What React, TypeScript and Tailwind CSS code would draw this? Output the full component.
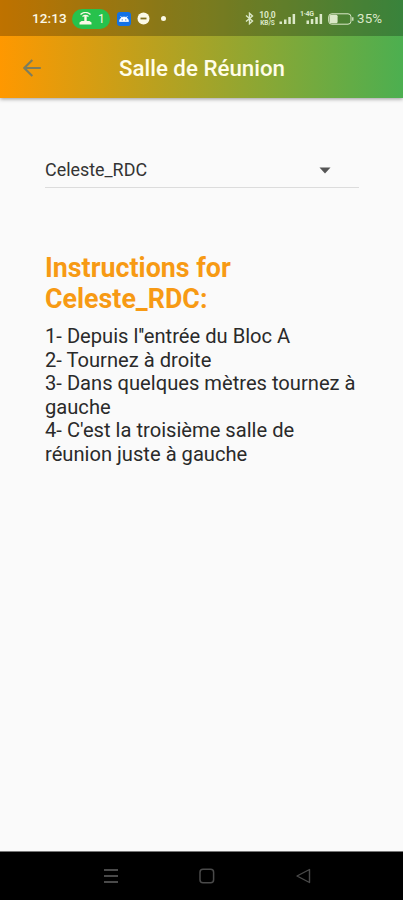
const steps = [
  "1- Depuis l''entrée du Bloc A",
  '2- Tournez à droite',
  '3- Dans quelques mètres tournez à gauche',
  "4- C'est la troisième salle de réunion juste à gauche",
]

const StatusBar = () => (
  <div className="flex h-9 items-center bg-black/25 pt-px pl-8 text-[#fbf9e6]">
    <span className="w-[35px] text-[13.5px] font-medium tracking-[0.1px] whitespace-nowrap">12:13</span>
    <div className="ml-[5px] flex h-[20px] w-[38px] items-center rounded-full bg-[#27c24c] pl-[7px]">
      <svg width="13" height="13" viewBox="0 0 13 13" fill="none" stroke="currentColor" strokeWidth="1.3">
        <path d="M1.5 2.6C4.5 0 8.5 0 11.5 2.6M3.5 4.6c2-1.6 4-1.6 6 0" />
        <path d="M6.5 4v5" strokeWidth="2.4" />
        <path d="M0.5 12.6v-2L2.5 9h8l2 1.6v2z" fill="currentColor" stroke="none" />
      </svg>
      <span className="ml-[6px] text-[12px]">1</span>
    </div>
    <svg className="ml-[7px]" width="14" height="14" viewBox="0 0 14 14">
      <rect width="14" height="14" rx="3" fill="#1372e6" />
      <path d="M2.5 9.5a4.5 4.5 0 0 1 9 0zM3.5 4l1.5 2.2M10.5 4L9 6.2" fill="#fff" stroke="#fff" strokeWidth="0.7" />
      <circle cx="5.2" cy="7.9" r="0.6" fill="#1372e6" />
      <circle cx="8.8" cy="7.9" r="0.6" fill="#1372e6" />
    </svg>
    <svg className="ml-[6px]" width="13" height="13" viewBox="0 0 13 13">
      <circle cx="6.5" cy="6.5" r="6" fill="currentColor" />
      <path d="M3.5 6.5h6" stroke="#806f1c" strokeWidth="1.8" />
    </svg>
    <span className="ml-[11px] size-[5px] rounded-full bg-[#fbf9e6]" />

    <div className="ml-[79px] flex items-center text-[#dbe8c8]">
      <svg width="9" height="13" viewBox="0 0 9 13" fill="none" stroke="currentColor" strokeWidth="1.4">
        <path d="M1 3.5l6.5 5.5-3 2.7V1.3l3 2.7L1 9.5" />
      </svg>
      <div className="ml-[5px] flex w-[17px] flex-col items-center font-bold whitespace-nowrap">
        <span className="text-[8.5px] leading-[9px] tracking-[-0.1px]">10,0</span>
        <span className="text-[6.5px] leading-[7px]">KB/S</span>
      </div>
      <svg className="ml-[3px]" width="17" height="12" viewBox="0 0 17 12" fill="currentColor">
        <rect x="0.5" y="8.5" width="2.5" height="2.5" />
        <rect x="5" y="6.5" width="2.5" height="4.5" />
        <rect x="9.3" y="4" width="2.5" height="7" />
        <rect x="13.6" y="1" width="2.5" height="10" />
      </svg>
      <div className="relative ml-[4px] flex w-[23px] justify-end">
        <span className="absolute top-[-2px] left-0 text-[7px] leading-[7px] font-bold tracking-[-0.3px]">1·4G</span>
        <svg width="17" height="12" viewBox="0 0 17 12" fill="currentColor">
          <rect x="0.5" y="7.5" width="2.5" height="3.5" />
          <rect x="4.8" y="6" width="2.5" height="5" />
          <rect x="9.3" y="4" width="2.5" height="7" />
          <rect x="13.6" y="1" width="2.5" height="10" />
        </svg>
      </div>
      <svg className="ml-[5px]" width="26" height="12" viewBox="0 0 26 12" fill="none" stroke="currentColor">
        <rect x="0.7" y="0.8" width="22.3" height="10.4" rx="3" />
        <rect x="1.6" y="1.8" width="8" height="8.4" rx="1.5" fill="currentColor" stroke="none" />
        <path d="M24.8 4.2v3.6" strokeWidth="1.3" />
      </svg>
      <span className="ml-[3px] text-[13.3px] tracking-[0.2px]">35%</span>
    </div>
  </div>
)

const AppBar = () => (
  <header className="bg-[linear-gradient(to_right,#ff9800,#4caf50)] shadow-[0_1px_4px_rgba(0,0,0,0.4)]">
    <StatusBar />
    <div className="flex h-[62px] items-center">
      <button className="ml-[23px] pt-px text-[#7c7d5e]" aria-label="Retour">
        <svg width="18" height="18" viewBox="0 0 18 18" fill="none" stroke="currentColor" strokeWidth="2.1">
          <path d="M17.8 9H1.5M9.3 1L1.3 9l8 8" />
        </svg>
      </button>
      <h1 className="ml-[78px] pt-[3px] text-[22.3px] font-medium whitespace-nowrap text-[#fffde9]">Salle de Réunion</h1>
    </div>
  </header>
)

const NavBar = () => (
  <nav className="flex h-[49px] items-center border-t border-[#777] bg-black pl-[104px] text-[#4a4a4a]">
    <svg width="14" height="16" viewBox="0 0 14 16" stroke="currentColor" strokeWidth="2">
      <path d="M0 2h14M0 8h14M0 14h14" />
    </svg>
    <svg className="ml-[81px]" width="16" height="16" viewBox="0 0 16 16" fill="none" stroke="currentColor" strokeWidth="1.5">
      <rect x="1" y="1.2" width="13.6" height="13.6" rx="3" />
    </svg>
    <svg className="ml-[81px]" width="15" height="16" viewBox="0 0 15 16" fill="none" stroke="currentColor" strokeWidth="1.4" strokeLinejoin="round">
      <path d="M13.5 1.5v13L1 8z" />
    </svg>
  </nav>
)

const App = () => {
  return (
    <div className="flex h-[900px] w-[403px] flex-col overflow-hidden bg-[#fafafa] font-['Roboto',sans-serif]">
      <AppBar />
      <main className="flex-1 pt-[55px] pr-[44px] pl-[45px]">
        <div className="flex h-[35px] items-center justify-between border-b border-[#dcdcdc] pr-[28px]">
          <span className="text-[17.9px] text-[#333]">Celeste_RDC</span>
          <svg width="12" height="7" viewBox="0 0 12 7" fill="#555">
            <path d="M0.5 0.5h11L6 6.5z" />
          </svg>
        </div>
        <h2 className="mt-[65px] w-[230px] text-[26.8px] leading-[31px] font-bold text-[#f79a14]">
          Instructions for Celeste_RDC:
        </h2>
        <div className="mt-[10px] text-[20.15px] leading-[23.5px] text-[#2a2a2a]">
          {steps.map((step) => (
            <p key={step}>{step}</p>
          ))}
        </div>
      </main>
      <NavBar />
    </div>
  )
}

export default App
